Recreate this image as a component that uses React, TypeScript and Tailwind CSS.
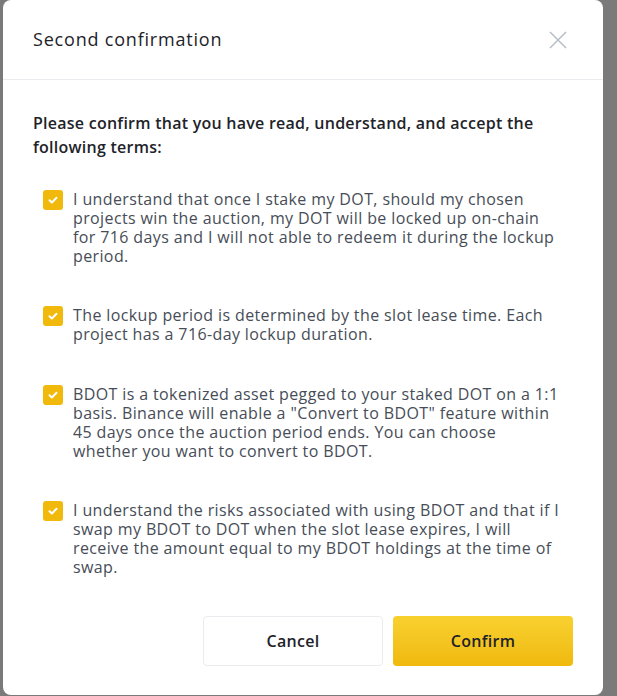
const terms = [
  "I understand that once I stake my DOT, should my chosen projects win the auction, my DOT will be locked up on-chain for 716 days and I will not able to redeem it during the lockup period.",
  "The lockup period is determined by the slot lease time. Each project has a 716-day lockup duration.",
  'BDOT is a tokenized asset pegged to your staked DOT on a 1:1 basis. Binance will enable a "Convert to BDOT" feature within 45 days once the auction period ends. You can choose whether you want to convert to BDOT.',
  "I understand the risks associated with using BDOT and that if I swap my BDOT to DOT when the slot lease expires, I will receive the amount equal to my BDOT holdings at the time of swap.",
];

const CheckBox = () => (
  <div className="w-5 h-5 shrink-0 rounded-[3px] bg-[#f0b90b] flex items-center justify-center">
    <svg width="12" height="12" viewBox="0 0 12 12" fill="none">
      <path d="M2.5 6.2l2.4 2.3L9.5 3.8" stroke="#fff" strokeWidth="2" strokeLinecap="round" strokeLinejoin="round" />
    </svg>
  </div>
);

const App = () => {
  return (
    <div className="h-[696px] w-[617px] bg-[#7a7a7a] pl-[3px] font-['Open_Sans',sans-serif] overflow-hidden">
      {/* Modal */}
      <div className="w-[600px] h-[695px] bg-white rounded-lg flex flex-col">
        {/* Header */}
        <div className="h-[80px] shrink-0 flex items-center justify-between pl-[30px] pr-[36px] border-b border-[#eaecef]">
          <h2 className="text-[18px] tracking-[0.8px] text-[#1e2329]">Second confirmation</h2>
          <svg width="18" height="18" viewBox="0 0 18 18" fill="none">
            <path d="M1 1l16 16M17 1L1 17" stroke="#b7bdc6" strokeWidth="1.5" />
          </svg>
        </div>

        {/* Body */}
        <div className="px-[30px] pt-[31px]">
          <p className="text-base leading-6 font-semibold tracking-[0.25px] text-[#1e2329] pr-[20px]">
            Please confirm that you have read, understand, and accept the following terms:
          </p>

          <div className="mt-[31px] pl-[10px] pr-[12px] flex flex-col gap-[40.4px]">
            {terms.map((t) => (
              <div key={t} className="flex gap-[10px]">
                <CheckBox />
                <p className="text-base leading-[19px] tracking-[0.38px] text-[#474d57]">{t}</p>
              </div>
            ))}
          </div>

          {/* Footer */}
          <div className="mt-[39px] flex justify-end gap-[10px]">
            <button className="w-[180px] h-[50px] rounded border border-[#eaecef] bg-white text-base font-semibold tracking-[0.3px] text-[#1e2329]">
              Cancel
            </button>
            <button className="w-[180px] h-[50px] rounded bg-gradient-to-b from-[#f8d12f] to-[#f0b90b] text-base font-semibold tracking-[0.3px] text-[#1e2329]">
              Confirm
            </button>
          </div>
        </div>
      </div>
    </div>
  );
};

export default App;
